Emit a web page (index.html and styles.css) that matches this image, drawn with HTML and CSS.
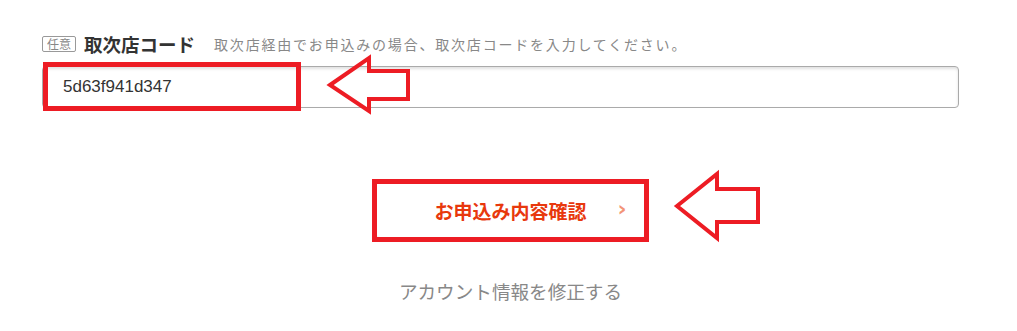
FILE: index.html
```html
<!DOCTYPE html>
<html>
<head>
  <meta charset="utf-8">
  <title>お申込み</title>
  <link rel="stylesheet" href="styles.css">
</head>
<body>
  <div class="page">
    <div class="field">
      <div class="field-head">
        <span class="badge">任意</span>
        <span class="field-label">取次店コード</span>
        <span class="field-help">取次店経由でお申込みの場合、取次店コードを入力してください。</span>
      </div>
      <input class="text-input" type="text" value="5d63f941d347">
    </div>

    <div class="actions">
      <button class="submit-btn" type="button">
        <span class="submit-text">お申込み内容確認</span>
        <span class="chevron">&rsaquo;</span>
      </button>
      <a class="back-link" href="#">アカウント情報を修正する</a>
    </div>
  </div>

  <!-- screenshot annotations drawn on top -->
  <svg class="annotations" width="1017" height="331" viewBox="0 0 1017 331">
    <g fill="none" stroke="#ed1c24" stroke-width="5">
      <rect x="45.5" y="64.5" width="253" height="44"/>
      <rect x="374.5" y="181.5" width="272" height="58"/>
    </g>
    <g fill="none" stroke="#ed1c24" stroke-width="4" stroke-linejoin="miter">
      <polygon points="330,85 369,58 369,71 408,71 408,99 369,99 369,111"/>
      <polygon points="677,206 717,174 717,189 758,189 758,222 717,222 717,238"/>
    </g>
  </svg>
</body>
</html>
```

FILE: styles.css
```css
body {
  margin: 0;
  font-family: "Noto Sans CJK JP", "Noto Sans", sans-serif;
  color: #333;
  background: #fff;
}
.page {
  padding-top: 30px;
}
.field {
  margin: 0 58px 0 42px;
}
.field-head {
  display: flex;
  align-items: center;
  height: 28px;
}
.badge {
  display: inline-block;
  border: 1px solid #999;
  border-radius: 2px;
  color: #888;
  font-size: 12px;
  line-height: 14px;
  padding: 0 4px;
  margin-right: 8px;
}
.field-label {
  font-size: 18.5px;
  font-weight: bold;
  color: #333;
  margin-right: 19px;
}
.field-help {
  font-size: 14px;
  letter-spacing: 1.8px;
  color: #888;
}
.text-input {
  display: block;
  box-sizing: border-box;
  width: 100%;
  height: 42px;
  margin-top: 8px;
  padding: 0 20px;
  border: 1px solid #aaa;
  border-radius: 4px;
  box-shadow: inset 0 2px 3px rgba(0,0,0,0.12);
  font-family: "Liberation Sans", Arial, sans-serif;
  font-size: 17px;
  color: #333;
}
.actions {
  display: flex;
  flex-direction: column;
  align-items: center;
  padding-left: 4px;
}
.submit-btn {
  position: relative;
  width: 268px;
  height: 54px;
  margin-top: 75px;
  border: none;
  border-radius: 3px;
  background: #fff;
  box-shadow: 0 2px 4px rgba(0,0,0,0.12);
  cursor: pointer;
  font-family: inherit;
}
.submit-text {
  font-size: 19px;
  font-weight: bold;
  color: #e8380d;
}
.chevron {
  position: absolute;
  right: 18px;
  top: 50%;
  transform: translateY(-55%);
  font-family: "DejaVu Sans", sans-serif;
  font-size: 22px;
  font-weight: bold;
  color: #f39477;
}
.back-link {
  margin-top: 40px;
  font-size: 18.6px;
  color: #888;
  text-decoration: none;
}
.annotations {
  position: absolute;
  top: 0;
  left: 0;
  pointer-events: none;
}
```
